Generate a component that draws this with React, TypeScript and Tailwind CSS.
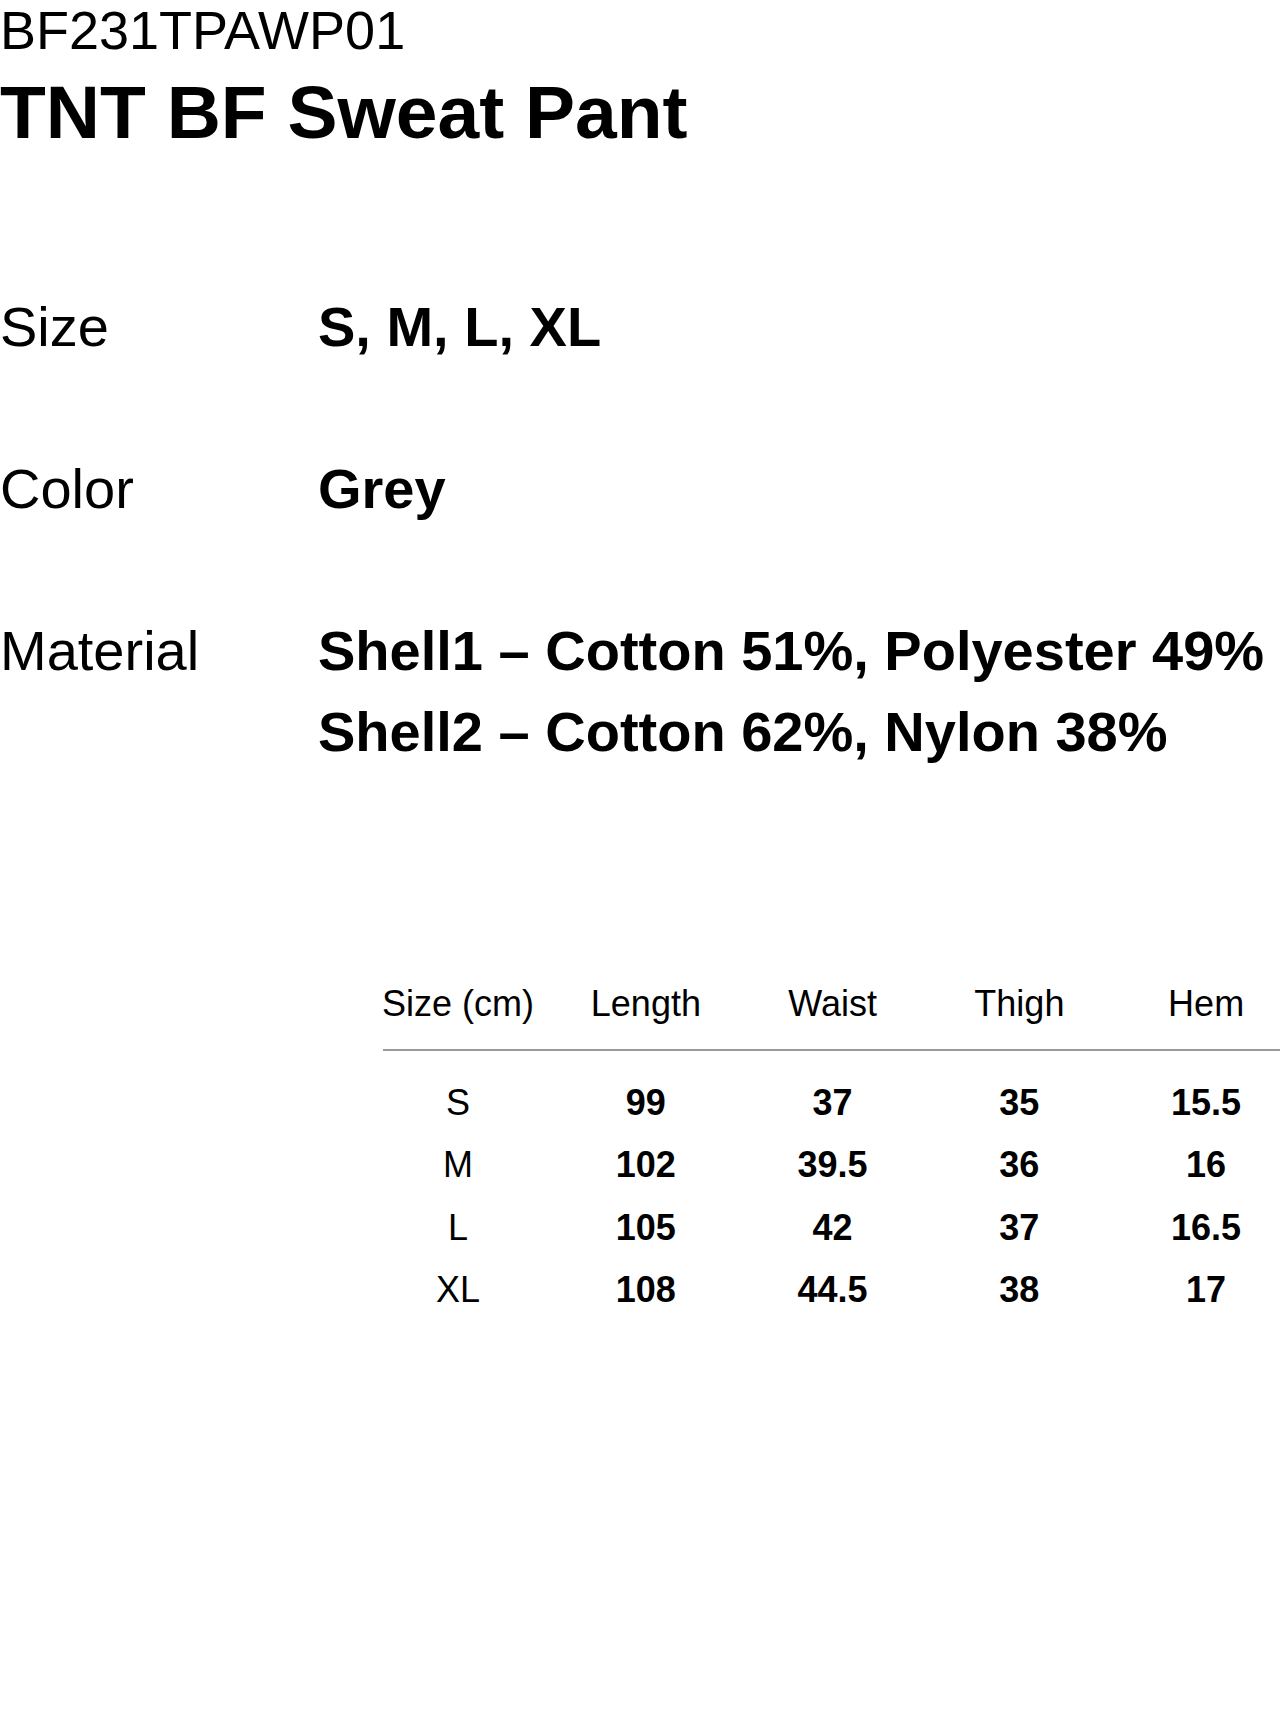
import React from "react";

const rows = [
  { size: "S", length: "99", waist: "37", thigh: "35", hem: "15.5" },
  { size: "M", length: "102", waist: "39.5", thigh: "36", hem: "16" },
  { size: "L", length: "105", waist: "42", thigh: "37", hem: "16.5" },
  { size: "XL", length: "108", waist: "44.5", thigh: "38", hem: "17" },
];

export default function App() {
  return (
    <div className="min-h-[1709px] w-full overflow-hidden bg-white text-black font-['Liberation_Sans',Arial,sans-serif]">
      <div className="text-[54px] leading-[60px] font-normal whitespace-nowrap">BF231TPAWP01</div>
      <h1 className="mt-[12px] text-[75px] leading-[80px] font-bold whitespace-nowrap">TNT BF Sweat Pant</h1>

      <div className="mt-[134px] flex flex-col gap-[81px]">
        <div className="flex">
          <div className="w-[318px] shrink-0 text-[56px] leading-[81px]">Size</div>
          <div className="text-[56px] leading-[81px] font-bold whitespace-nowrap">S, M, L, XL</div>
        </div>
        <div className="flex">
          <div className="w-[318px] shrink-0 text-[56px] leading-[81px]">Color</div>
          <div className="text-[56px] leading-[81px] font-bold whitespace-nowrap">Grey</div>
        </div>
        <div className="flex">
          <div className="w-[318px] shrink-0 text-[56px] leading-[81px]">Material</div>
          <div className="flex flex-col text-[56px] leading-[81px] font-bold whitespace-nowrap">
            <span>Shell1 – Cotton 51%, Polyester 49%</span>
            <span>Shell2 – Cotton 62%, Nylon 38%</span>
          </div>
        </div>
      </div>

      <div className="mt-[212px] ml-[383px]">
        <div className="grid grid-cols-[150px_repeat(4,1fr)] gap-x-[39px] text-[36px] leading-[40px] text-center whitespace-nowrap">
          <div className="flex justify-center">
            <span>Size (cm)</span>
          </div>
          <div>Length</div>
          <div>Waist</div>
          <div>Thigh</div>
          <div>Hem</div>
        </div>
        <div className="mt-[25px] h-[2px] bg-[#9a9a9a]" />
        <div className="mt-[21px] flex flex-col">
          {rows.map((r) => (
            <div
              key={r.size}
              className="grid grid-cols-[150px_repeat(4,1fr)] gap-x-[39px] text-[36px] leading-[62.3px] text-center"
            >
              <div className="font-normal">{r.size}</div>
              <div className="font-bold">{r.length}</div>
              <div className="font-bold">{r.waist}</div>
              <div className="font-bold">{r.thigh}</div>
              <div className="font-bold">{r.hem}</div>
            </div>
          ))}
        </div>
      </div>
    </div>
  );
}
